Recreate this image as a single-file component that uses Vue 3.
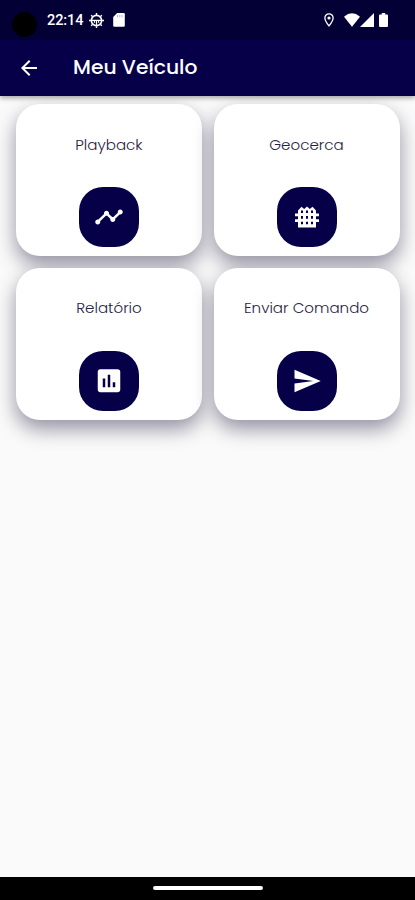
<template>
  <div class="screen">
    <header class="header">
      <div class="status">
        <span class="camera"></span>
        <span class="time">22:14</span>
        <svg class="gear" viewBox="0 0 16 16">
          <circle cx="8" cy="8" r="5.5" fill="none" stroke="#fff" stroke-width="1.7" />
          <path d="M8 0v2M8 14v2M0 8h2M14 8h2M2.300 2.300l1.400 1.400M12.300 12.300l1.400 1.400M2.300 13.700l1.400-1.400M12.300 3.700l1.400-1.400" fill="none" stroke="#fff" stroke-width="1.5" />
          <path d="M3 7.800h10M8 7.500V13M5.800 8v2.400M10.200 8v2.400" fill="none" stroke="#fff" stroke-width="1.300" />
        </svg>
        <svg class="sd" viewBox="0 0 12 14">
          <path d="M4.2 0H10.6A1.2 1.2 0 0 1 11.8 1.2V12.6A1.2 1.2 0 0 1 10.6 13.8H1.4A1.2 1.2 0 0 1 .2 12.6V4Z" fill="#fff" />
          <path d="M4.5 2v2.4M6.8 2v2.4M9.1 2v2.4" stroke="#aaa9bd" stroke-width=".8" />
        </svg>
        <span class="spacer"></span>
        <svg class="pin" viewBox="0 0 10 14">
          <path d="M5 .8C2.6.8.9 2.600.9 4.900c0 2.800 4.100 8 4.100 8s4.100-5.200 4.100-8C9.100 2.600 7.400.8 5 .8z" fill="none" stroke="#fff" stroke-width="1.3" />
          <circle cx="5" cy="5" r="1.6" fill="#fff" />
        </svg>
        <svg class="wifi" viewBox="0 0 16 14">
          <path d="M0 3.700Q8-3.200 16 3.700L8 13.800Z" fill="#fff" />
        </svg>
        <svg class="signal" viewBox="0 0 14 14">
          <path d="M14 0V14H0Z" fill="#fff" />
        </svg>
        <svg class="battery" viewBox="0 0 9 14">
          <path d="M2.800 0h3.400v1.400H8a1 1 0 0 1 1 1V13a1 1 0 0 1-1 1H1a1 1 0 0 1-1-1V2.400a1 1 0 0 1 1-1h1.800z" fill="#fff" />
        </svg>
      </div>
      <div class="bar">
        <svg class="back" viewBox="0 0 24 24">
          <path d="M20 11H7.830l5.590-5.590L12 4l-8 8 8 8 1.410-1.410L7.830 13H20v-2z" fill="#fff" />
        </svg>
        <h1 class="title">Meu Veículo</h1>
      </div>
    </header>

    <main class="grid">
      <div v-for="item in items" :key="item.icon" class="card">
        <span class="label">{{ item.label }}</span>
        <div class="tile" :class="item.icon">
          <svg v-if="item.icon === 'playback'" viewBox="0 0 24 24">
            <path d="M23 8c0 1.100-.9 2-2 2-.180 0-.350-.020-.510-.070l-3.560 3.550c.050.160.070.340.070.520 0 1.100-.9 2-2 2s-2-.9-2-2c0-.180.020-.360.070-.520l-2.550-2.550c-.160.050-.340.070-.520.070s-.360-.020-.520-.070l-4.550 4.560c.050.160.070.330.070.510 0 1.100-.9 2-2 2s-2-.9-2-2 .9-2 2-2c.180 0 .350.020.510.070l4.560-4.550C8.020 9.360 8 9.180 8 9c0-1.100.9-2 2-2s2 .9 2 2c0 .180-.020.360-.070.520l2.550 2.550c.160-.050.340-.070.520-.070s.360.020.520.070l3.550-3.560C19.020 8.350 19 8.180 19 8c0-1.100.9-2 2-2s2 .9 2 2z" />
          </svg>
          <svg v-else-if="item.icon === 'geofence'" viewBox="0 0 24 22">
            <path d="M3 21.500V4.500L6.500 .8 9.200 3 12 .5 14.800 3 17.500 .8 21 4.500V21.500Z M0 7.400h24v2.800H0Z M0 13.200h24v2.800H0Z" />
            <path class="hole" d="M6 4.600h2v2.400H6Z M11 4.600h2v2.400h-2Z M16 4.600h2v2.400h-2Z M6 10h2v2.800H6Z M11 10h2v2.800h-2Z M16 10h2v2.800h-2Z M6 15.800h2v2.400H6Z M11 15.800h2v2.400h-2Z M16 15.800h2v2.400h-2Z" />
          </svg>
          <svg v-else-if="item.icon === 'report'" viewBox="0 0 24 24">
            <path d="M19 2.500H5c-1.100 0-2 .9-2 2v14.500c0 1.100.9 2 2 2h14c1.100 0 2-.9 2-2V4.500c0-1.100-.9-2-2-2zM9 17H7v-7h2v7zm4 0h-2V7h2v10zm4 0h-2v-4h2v4z" />
          </svg>
          <svg v-else viewBox="0 0 24 24">
            <path d="M2.010 21L23 12 2.010 3 2 10l15 2-15 2z" />
          </svg>
        </div>
      </div>
    </main>

    <footer class="nav">
      <span class="handle"></span>
    </footer>
  </div>
</template>

<script setup>
const items = [
  { label: 'Playback', icon: 'playback' },
  { label: 'Geocerca', icon: 'geofence' },
  { label: 'Relatório', icon: 'report' },
  { label: 'Enviar Comando', icon: 'send' }
]
</script>

<style>
body {
  margin: 0;
  background: #fafafa;
}
</style>

<style scoped>
.screen {
  display: flex;
  flex-direction: column;
  height: 900px;
  overflow: hidden;
  background: #fafafa;
  font-family: Poppins, Lato, sans-serif;
}

.header {
  position: relative;
  z-index: 1;
  height: 96px;
  background: #060049;
  box-shadow: 0 2px 5px rgba(0, 0, 0, 0.35);
}

.status {
  display: flex;
  align-items: center;
  box-sizing: border-box;
  height: 40px;
  padding: 0 27px 0 12px;
  background: #030035;
}

.camera {
  width: 25px;
  height: 25px;
  margin-top: 9px;
  border-radius: 50%;
  background: #000;
}

.time {
  width: 36px;
  margin-left: 10px;
  color: #fff;
  font: 500 14.5px/20px Roboto, sans-serif;
  letter-spacing: -0.1px;
  margin-top: 2px;
}

.gear {
  width: 15px;
  height: 15px;
  margin-left: 6px;
}

.sd {
  width: 12px;
  height: 14px;
  margin-left: 9px;
}

.spacer {
  flex: 1;
}

.pin {
  width: 10px;
  height: 14px;
  margin-right: 10px;
}

.wifi {
  width: 16px;
  height: 14px;
}

.signal {
  width: 14px;
  height: 14px;
  margin: 0 5px 0 0;
}

.battery {
  width: 9px;
  height: 14px;
}

.bar {
  display: flex;
  align-items: center;
  height: 56px;
  padding-left: 17px;
}

.back {
  width: 24px;
  height: 24px;
}

.title {
  margin: 0 0 2px 32px;
  color: #fff;
  font-size: 20.3px;
  font-weight: 500;
  line-height: 30px;
  white-space: nowrap;
}

.grid {
  display: grid;
  grid-template-columns: 186px 186px;
  grid-auto-rows: 152px;
  gap: 11.5px 11.5px;
  padding: 8px 0 0 16px;
  flex: 1;
  align-content: start;
}

.card {
  display: flex;
  flex-direction: column;
  align-items: center;
  border-radius: 24px;
  background: #fff;
  box-shadow: 0 9px 20px rgba(6, 0, 40, 0.42);
}

.label {
  height: 24px;
  margin-top: 28.5px;
  color: #28243f;
  font-size: 15.1px;
  font-weight: 300;
  line-height: 24px;
  white-space: nowrap;
}

.tile {
  display: flex;
  align-items: center;
  justify-content: center;
  width: 60px;
  height: 60px;
  margin-top: 30.5px;
  border-radius: 24px;
  background: #060049;
}

.tile svg {
  width: 30px;
  height: 30px;
  fill: #fff;
}

.tile.geofence svg {
  width: 24px;
  height: 22px;
}

.tile .hole {
  fill: #060049;
}

.nav {
  display: flex;
  justify-content: center;
  height: 23px;
  background: #000;
}

.handle {
  width: 110px;
  height: 4px;
  margin-top: 9px;
  border-radius: 2px;
  background: #fff;
}
</style>
